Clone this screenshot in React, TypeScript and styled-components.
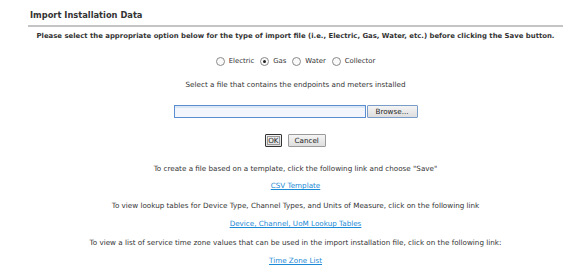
import { useState } from "react"
import styled, { createGlobalStyle } from "styled-components"

const TEXT = "#333"
const LINK = "#1b8ad6"

const GlobalStyle = createGlobalStyle`
    html, body {
        margin: 0;
        padding: 0;
        background: #fff;
    }
    body {
        font-family: "DejaVu Sans", Verdana, sans-serif;
        color: ${TEXT};
    }
`

const Page = styled.div`
    width: 535px;
    margin-left: 28px;
    padding-top: 10px;
`

const Title = styled.div`
    font-size: 8.3px;
    line-height: 10px;
    font-weight: 700;
    padding-left: 2px;
    padding-bottom: 5px;
    border-bottom: 2px solid #c4c4c4;
`

const Intro = styled.div`
    font-size: 6.9px;
    line-height: 8px;
    font-weight: 700;
    text-align: center;
    white-space: nowrap;
    margin-top: 5px;
`

const Section = styled.div<{ $top: number }>`
    display: flex;
    justify-content: center;
    align-items: center;
    margin-top: ${p => p.$top}px;
    font-size: 7.2px;
    line-height: 9px;
    white-space: nowrap;
`

const RadioRow = styled(Section)`
    gap: 6px;
    font-size: 6.9px;
`

const RadioLabel = styled.label`
    display: flex;
    align-items: center;
    gap: 4px;
    cursor: pointer;
`

const RadioDot = styled.span<{ $on: boolean }>`
    width: 7px;
    height: 7px;
    border: 1px solid #8a8a8a;
    border-radius: 50%;
    background: #fafafa;
    display: flex;
    align-items: center;
    justify-content: center;

    &::after {
        content: "";
        width: 3px;
        height: 3px;
        border-radius: 50%;
        background: ${p => (p.$on ? "#222" : "transparent")};
    }
`

const FileInput = styled.div`
    width: 190px;
    height: 11px;
    border: 1px solid #5a8ed0;
    background: linear-gradient(#dce7f6 0, #dce7f6 2px, #f2f5fb 2px);
`

const Button = styled.button<{ $focus?: boolean; $pad: number }>`
    font-family: "DejaVu Sans", Verdana, sans-serif;
    font-size: 7.2px;
    line-height: 9px;
    color: #222;
    padding: 0 ${p => p.$pad}px;
    height: 13px;
    margin: 0 3px;
    background: linear-gradient(#f4f4f4, #dedede);
    border: 1px solid ${p => (p.$focus ? "#333" : "#9a9a9a")};
    outline: ${p => (p.$focus ? "1px solid #999" : "none")};
    outline-offset: -3px;
    border-radius: 1px;
`

const BrowseButton = styled(Button)`
    width: 51px;
    margin: 0 0 0 1px;
    border-color: #7a9cc8;
`

const Link = styled.a`
    color: ${LINK};
    text-decoration: underline;
    cursor: pointer;
`

const fileTypes = ["Electric", "Gas", "Water", "Collector"]

const App = () => {
    const [type, setType] = useState("Gas")
    return (
        <>
            <GlobalStyle />
            <Page>
                <Title>Import Installation Data</Title>
                <Intro>
                    Please select the appropriate option below for the type of import file (i.e., Electric, Gas, Water, etc.) before clicking the Save button.
                </Intro>
                <RadioRow $top={17}>
                    {fileTypes.map(t => (
                        <RadioLabel key={t} onClick={() => setType(t)}>
                            <RadioDot $on={type === t} />
                            {t}
                        </RadioLabel>
                    ))}
                </RadioRow>
                <Section $top={14}>Select a file that contains the endpoints and meters installed</Section>
                <Section $top={16}>
                    <FileInput />
                    <BrowseButton $pad={0}>Browse...</BrowseButton>
                </Section>
                <Section $top={16}>
                    <Button $focus $pad={2}>OK</Button>
                    <Button $pad={6}>Cancel</Button>
                </Section>
                <Section $top={17}>To create a file based on a template, click the following link and choose "Save"</Section>
                <Section $top={8}><Link>CSV Template</Link></Section>
                <Section $top={11}>To view lookup tables for Device Type, Channel Types, and Units of Measure, click on the following link</Section>
                <Section $top={9}><Link>Device, Channel, UoM Lookup Tables</Link></Section>
                <Section $top={10}>To view a list of service time zone values that can be used in the import installation file, click on the following link:</Section>
                <Section $top={9}><Link>Time Zone List</Link></Section>
            </Page>
        </>
    )
}

export default App
